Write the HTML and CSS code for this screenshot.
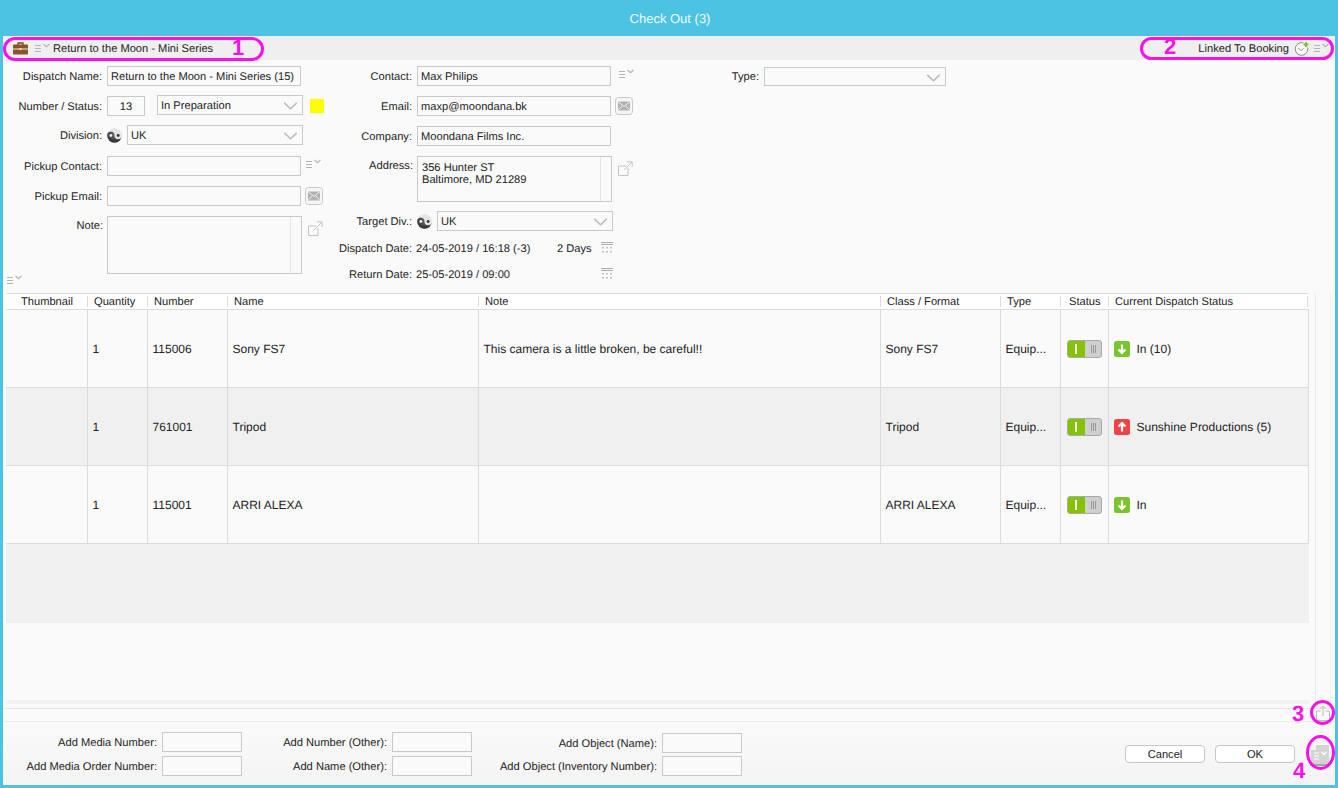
FILE: index.html
```html
<!DOCTYPE html>
<html lang="en">
<head>
<meta charset="utf-8">
<title>Check Out (3)</title>
<link rel="stylesheet" href="styles.css">
</head>
<body>
<svg class="defs" width="0" height="0" aria-hidden="true">
  <defs>
    <radialGradient id="g-dark" cx="50%" cy="30%" r="75%"><stop offset="0" stop-color="#6a6a70"/><stop offset="1" stop-color="#222226"/></radialGradient>
    <symbol id="i-menu" viewBox="0 0 16 10">
      <path d="M0 2.500h6M0 5.500h6M0 8.500h6" stroke="#b4b4b4" fill="none"/>
      <path d="M8.500 1l3 2.800 3-2.800" stroke="#b4b4b4" stroke-width="1.200" fill="none"/>
    </symbol>
    <symbol id="i-yin" viewBox="0 0 16 16">
      <circle cx="8" cy="8" r="7.800" fill="#e4e4e4"/>
      <path d="M15.800 8A7.800 7.800 0 0 1 .2 8 3.900 3.900 0 0 1 8 8a3.900 3.900 0 0 0 7.800 0z" fill="url(#g-dark)"/>
      <circle cx="4.100" cy="8" r="1.500" fill="#eee"/>
      <circle cx="11.900" cy="8" r="1.500" fill="#333"/>
    </symbol>
    <symbol id="i-mail" viewBox="0 0 18 18">
      <rect x=".5" y=".5" width="17" height="17" rx="3" fill="#f6f6f6" stroke="#c8c8c8"/>
      <rect x="3" y="4.500" width="12" height="9" fill="#b2b2b2"/>
      <path d="M3 4.500l6 5 6-5M3 13.500l4.500-5M15 13.500l-4.500-5" stroke="#f0f0f0" fill="none"/>
    </symbol>
    <symbol id="i-link" viewBox="0 0 15 15">
      <path d="M8 5H.5v9.500H10V7M6 9l8-8M9 .8h5.200V6" stroke="#c4c4c4" fill="none"/>
    </symbol>
    <symbol id="i-cal" viewBox="0 0 12 11">
      <path d="M0 .5h12M0 2.500h12" stroke="#adadad"/>
      <path d="M1 5h2v1.500H1zM5 5h2v1.500H5zM9 5h2v1.500H9zM1 9h2v1.500H1zM5 9h2v1.500H5zM9 9h2v1.500H9z" fill="#c0c0c0"/>
    </symbol>
  </defs>
</svg>

<div class="app">
  <header class="titlebar">Check Out (3)</header>

  <main class="dialog">
    <div class="topbar">
      <div class="topbar-left">
        <svg class="briefcase" width="15" height="13" viewBox="0 0 15 13"><path d="M5 3V1h5v2" fill="none" stroke="#7b4a22" stroke-width="1.300"/><rect y="2.500" width="15" height="10" rx="1" fill="#8a5528"/><path d="M0 7h15" stroke="#f1e6d8"/><rect x="6.500" y="6" width="2" height="2" fill="#f1e6d8"/></svg>
        <svg class="ic-menu" width="16" height="10"><use href="#i-menu"/></svg>
        <span class="bar-text">Return to the Moon - Mini Series</span>
      </div>
      <div class="topbar-right">
        <span class="bar-text">Linked To Booking</span>
        <svg class="clock" width="17" height="16" viewBox="0 0 17 16"><circle cx="7.500" cy="9" r="6.300" fill="#fafafa" stroke="#8c8c8c"/><path d="M4 8l3 2.500 2.500-2" stroke="#999" fill="none"/><path d="M12 1.500v6M9 4.500h6" stroke="#fafafa" stroke-width="3.500"/><path d="M12 2v5M9.500 4.500h5" stroke="#76c21f" stroke-width="1.800"/></svg>
        <svg class="ic-menu" width="16" height="10"><use href="#i-menu"/></svg>
      </div>
    </div>

    <form class="form">
      <div class="col col-a">
        <div class="row"><label class="lbl">Dispatch Name:</label><div class="field w-194">Return to the Moon - Mini Series (15)</div></div>
        <div class="row"><label class="lbl">Number / Status:</label><div class="field w-38 center">13</div>
          <div class="select w-146 ml-12 up-1">In Preparation<svg class="chev" width="16" height="9" viewBox="0 0 16 9"><path d="M1 1l7 6.500L15 1" fill="none" stroke="#b9b9b9" stroke-width="1.600"/></svg></div>
          <span class="swatch"></span></div>
        <div class="row up-row"><label class="lbl">Division:</label><svg class="yin" width="15" height="15"><use href="#i-yin"/></svg>
          <div class="select w-176">UK<svg class="chev" width="16" height="9" viewBox="0 0 16 9"><path d="M1 1l7 6.500L15 1" fill="none" stroke="#b9b9b9" stroke-width="1.600"/></svg></div></div>
        <div class="row"><label class="lbl">Pickup Contact:</label><div class="field w-194"></div><svg class="ic-menu side-menu" width="16" height="10"><use href="#i-menu"/></svg></div>
        <div class="row"><label class="lbl">Pickup Email:</label><div class="field w-194"></div><svg class="side-mail" width="18" height="18"><use href="#i-mail"/></svg></div>
        <div class="row row-note"><label class="lbl lbl-top lbl-note">Note:</label><div class="area w-195 h-58"><span class="area-bar"></span></div><svg class="side-link" width="15" height="15"><use href="#i-link"/></svg></div>
        <svg class="ic-menu form-menu" width="16" height="10"><use href="#i-menu"/></svg>
      </div>

      <div class="col col-b">
        <div class="row"><label class="lbl">Contact:</label><div class="field w-194">Max Philips</div><svg class="ic-menu side-menu" width="16" height="10"><use href="#i-menu"/></svg></div>
        <div class="row"><label class="lbl">Email:</label><div class="field w-194">maxp@moondana.bk</div><svg class="side-mail" width="18" height="18"><use href="#i-mail"/></svg></div>
        <div class="row"><label class="lbl">Company:</label><div class="field w-194">Moondana Films Inc.</div></div>
        <div class="row row-addr"><label class="lbl lbl-top lbl-note">Address:</label><div class="area w-195 h-46">356 Hunter ST<br>Baltimore, MD 21289<span class="area-bar"></span></div><svg class="side-link" width="15" height="15"><use href="#i-link"/></svg></div>
        <div class="row row-target"><label class="lbl">Target Div.:</label><svg class="yin" width="15" height="15"><use href="#i-yin"/></svg>
          <div class="select w-176">UK<svg class="chev" width="16" height="9" viewBox="0 0 16 9"><path d="M1 1l7 6.500L15 1" fill="none" stroke="#b9b9b9" stroke-width="1.600"/></svg></div></div>
        <div class="row row-date"><label class="lbl">Dispatch Date:</label><span class="date">24-05-2019 / 16:18 (-3)</span><span class="days">2 Days</span><svg class="cal" width="12" height="11"><use href="#i-cal"/></svg></div>
        <div class="row row-date2"><label class="lbl">Return Date:</label><span class="date">25-05-2019 / 09:00</span><svg class="cal" width="12" height="11"><use href="#i-cal"/></svg></div>
      </div>

      <div class="col col-c">
        <div class="row"><label class="lbl">Type:</label><div class="select w-182 h-19"><svg class="chev" width="16" height="9" viewBox="0 0 16 9"><path d="M1 1l7 6.500L15 1" fill="none" stroke="#b9b9b9" stroke-width="1.600"/></svg></div></div>
      </div>
    </form>

    <section class="list">
      <div class="list-main">
        <table class="grid">
          <colgroup>
            <col class="c1"><col class="c2"><col class="c3"><col class="c4"><col class="c5"><col class="c6"><col class="c7"><col class="c8"><col class="c9">
          </colgroup>
          <thead>
            <tr><th class="th-thumb"><span>Thumbnail</span></th><th><span>Quantity</span></th><th><span>Number</span></th><th><span>Name</span></th><th><span>Note</span></th><th><span>Class / Format</span></th><th><span>Type</span></th><th class="th-status"><span>Status</span></th><th><span>Current Dispatch Status</span></th></tr>
          </thead>
          <tbody>
            <tr>
              <td></td><td>1</td><td>115006</td><td>Sony FS7</td><td>This camera is a little broken, be careful!!</td><td>Sony FS7</td><td>Equip...</td>
              <td class="td-toggle"><span class="toggle"><span class="t-on"></span><span class="t-off"></span></span></td>
              <td><span class="state"><svg width="16" height="16" viewBox="0 0 16 16"><rect width="16" height="16" rx="2.500" fill="#7ac52c"/><path d="M8 3.500v8M4.500 8.500L8 12l3.500-3.500" stroke="#fff" stroke-width="2.200" fill="none"/></svg>In (10)</span></td>
            </tr>
            <tr class="alt">
              <td></td><td>1</td><td>761001</td><td>Tripod</td><td></td><td>Tripod</td><td>Equip...</td>
              <td class="td-toggle"><span class="toggle"><span class="t-on"></span><span class="t-off"></span></span></td>
              <td><span class="state"><svg width="16" height="16" viewBox="0 0 16 16"><rect width="16" height="16" rx="2.500" fill="#f04444"/><path d="M8 12.500v-8M4.500 7.500L8 4l3.500 3.500" stroke="#fff" stroke-width="2.200" fill="none"/></svg>Sunshine Productions (5)</span></td>
            </tr>
            <tr>
              <td></td><td>1</td><td>115001</td><td>ARRI ALEXA</td><td></td><td>ARRI ALEXA</td><td>Equip...</td>
              <td class="td-toggle"><span class="toggle"><span class="t-on"></span><span class="t-off"></span></span></td>
              <td><span class="state"><svg width="16" height="16" viewBox="0 0 16 16"><rect width="16" height="16" rx="2.500" fill="#7ac52c"/><path d="M8 3.500v8M4.500 8.500L8 12l3.500-3.500" stroke="#fff" stroke-width="2.200" fill="none"/></svg>In</span></td>
            </tr>
          </tbody>
        </table>
        <div class="empty"></div>
        <div class="spacer"></div>
        <div class="hscroll"></div>
      </div>
      <div class="vscroll"></div>
    </section>

    <div class="strip">
      <svg class="share" width="14" height="16" viewBox="0 0 14 16"><path d="M4.500 6H.5v9.500h13V6h-4M7 11V1M3.800 3.800L7 .8l3.200 3" fill="none" stroke="#bcbcbc"/></svg>
    </div>

    <footer class="footer">
      <div class="adds">
        <div class="add-col add-a">
          <div class="add-row"><label class="lbl-add">Add Media Number:</label><div class="field w-80"></div></div>
          <div class="add-row"><label class="lbl-add">Add Media Order Number:</label><div class="field w-80"></div></div>
        </div>
        <div class="add-col add-b">
          <div class="add-row"><label class="lbl-add">Add Number (Other):</label><div class="field w-80"></div></div>
          <div class="add-row"><label class="lbl-add">Add Name (Other):</label><div class="field w-80"></div></div>
        </div>
        <div class="add-col add-c">
          <div class="add-row"><label class="lbl-add">Add Object (Name):</label><div class="field w-80"></div></div>
          <div class="add-row"><label class="lbl-add">Add Object (Inventory Number):</label><div class="field w-80"></div></div>
        </div>
      </div>
      <div class="actions">
        <button class="btn" type="button">Cancel</button>
        <button class="btn" type="button">OK</button>
        <svg class="doc" width="20" height="22" viewBox="0 0 20 22"><path d="M1 20V6l5-5h13v19z" fill="#d4d4d4"/><path d="M6 1v5H1z" fill="#f4f4f4"/><path d="M4 9h5M4 12h5M4 15h5" stroke="#fff"/><path d="M11.500 8l2.500 2.500L16.500 8" stroke="#fff" stroke-width="1.400" fill="none"/><path d="M0 21h20" stroke="#8c8c8c" stroke-width="1.500"/></svg>
      </div>
    </footer>
  </main>

  <span class="ring ring-1"></span><span class="num num-1">1</span>
  <span class="ring ring-2"></span><span class="num num-2">2</span>
  <span class="ring ring-3"></span><span class="num num-3">3</span>
  <span class="ring ring-4"></span><span class="num num-4">4</span>
</div>
</body>
</html>
```

FILE: styles.css
```css
* { box-sizing: border-box; }
html, body { margin: 0; height: 100%; overflow: hidden; }
body {
  font-family: "Liberation Sans", Arial, sans-serif;
  font-size: 11.130px;
  color: #222;
  background: #4cc3e3;
  text-rendering: geometricPrecision;
}
.defs { position: absolute; }
svg { display: block; flex: none; }

.app { position: relative; display: flex; flex-direction: column; width: 1338px; height: 788px; }
.titlebar {
  height: 36px;
  flex: none;
  display: flex;
  align-items: center;
  justify-content: center;
  color: #f2fbfe;
  font-size: 13px;
  padding-left: 2px;
}
.dialog {
  flex: 1;
  min-height: 0;
  margin: 0 3px 3px;
  background: #fafafa;
  display: flex;
  flex-direction: column;
}

/* top bar */
.topbar {
  height: 24px;
  flex: none;
  background: #efefef;
  display: flex;
  align-items: center;
  justify-content: space-between;
}
.bar-text { padding-top: 2px; }
.topbar-left { display: flex; align-items: center; padding-left: 10px; }
.topbar-left .briefcase { margin-right: 7px; }
.topbar-left .ic-menu { margin-right: 2px; margin-top: -1px; }
.topbar-right { display: flex; align-items: center; padding-right: 5px; }
.topbar-right .bar-text { margin-right: 5px; }
.topbar-right .clock { margin-right: 1px; }
.topbar-right .ic-menu { margin-left: 2px; margin-top: -1px; }

/* form */
.form { height: 233px; flex: none; display: flex; padding-top: 6px; }
.col { display: flex; flex-direction: column; gap: 10px; }
.col-a { width: 327px; --lbl: 99px; }
.col-b { width: 370px; --lbl: 82px; }
.col-c { --lbl: 59px; }
.row { display: flex; align-items: center; height: 20px; }
.lbl { width: var(--lbl); flex: none; text-align: right; margin-right: 5px; white-space: nowrap; padding-top: 2px; }
.lbl-top { align-self: flex-start; padding-top: 4px; }
.lbl-note { margin-right: 4px; width: calc(var(--lbl) + 1px); }
.field, .select, .area {
  background: #fafafa;
  border: 1px solid #c9c9c9;
  height: 20px;
  display: flex;
  align-items: center;
  padding: 2px 0 0 3px;
  white-space: nowrap;
  flex: none;
}
.center { justify-content: center; padding-left: 0; }
.w-194 { width: 194px; }
.w-38 { width: 38px; }
.w-146 { width: 146px; }
.w-176 { width: 176px; }
.w-182 { width: 182px; }
.w-195 { width: 195px; }
.w-80 { width: 80px; }
.h-19 { height: 19px; }
.h-58 { height: 58px; }
.h-46 { height: 46px; }
.ml-12 { margin-left: 12px; }
.up-1 { margin-top: -2px; }
.select { position: relative; justify-content: flex-start; }
.chev { position: absolute; right: 4px; top: 6px; width: 15px; height: 8px; }
.swatch { width: 14px; height: 14px; margin-left: 7px; background: #ffff00; }
.yin { margin-right: 5px; }
.up-row { margin-top: -1px; margin-bottom: 1px; }
.side-menu { margin: -4px 0 0 5px; }
.col-b .side-menu { margin-left: 8px; }
.side-mail { margin: 0 0 0 4px; }
.side-link { align-self: flex-start; margin: 5px 0 0 6px; }
.row-note { height: 58px; align-items: flex-start; }
.row-addr { height: 46px; align-items: flex-start; }
.area { position: relative; display: block; padding: 5px 0 0 4px; line-height: 12px; }
.area-bar { position: absolute; top: 0; right: 0; bottom: 0; width: 11px; border-left: 1px solid #e4e4e4; }
.form-menu { margin: -9px 0 0 4px; }
.row-target { margin-top: -1px; }
.row-date { margin-top: -3px; }
.row-date2 { margin-top: -4px; }
.date { width: 141px; margin-left: -1px; padding-top: 2px; }
.days { width: 44px; padding-top: 2px; }
.cal { margin-top: -2px; }
.row-date2 .date { width: 185px; }

/* list */
.list { flex: 1; min-height: 0; display: flex; }
.list-main { width: 1303px; margin-left: 3px; display: flex; flex-direction: column; }
.grid { width: 1302px; table-layout: fixed; border-collapse: collapse; flex: none; }
.c1 { width: 81px; }
.c2 { width: 60px; }
.c3 { width: 80px; }
.c4 { width: 251px; }
.c5 { width: 402px; }
.c6 { width: 120px; }
.c7 { width: 60px; }
.c8 { width: 48px; }
.c9 { width: 200px; }
.grid th {
  height: 16px;
  padding: 0;
  background: #fff;
  font-weight: 400;
  font-size: 11.130px;
  text-align: left;
  border-top: 1px solid #dcdcdc;
  border-bottom: 1px solid #dcdcdc;
}
.grid th span { display: block; height: 11px; line-height: 13px; padding-left: 6px; border-left: 1px solid #dcdcdc; white-space: nowrap; }
.grid th.th-thumb span { padding-left: 15px; border-left: 0; }
.grid th.th-status span { padding-left: 8px; }
.grid th:last-child span { border-right: 1px solid #dcdcdc; }
.grid td {
  height: 78px;
  padding: 0 0 0 5px;
  font-size: 12px;
  border-bottom: 1px solid #dcdcdc;
  border-left: 1px solid #dcdcdc;
  white-space: nowrap;
}
.grid td:first-child { border-left: 0; }
.grid td:last-child { border-right: 1px solid #dcdcdc; }
.alt td { background: #f0f0f0; }
.grid .td-toggle { padding-left: 6px; }
.toggle {
  display: flex;
  width: 35px;
  height: 18px;
  border: 1px solid #a9a9a9;
  border-radius: 3px;
  overflow: hidden;
  background: #cfcfcf;
}
.t-on { width: 17px; background: #84c300; position: relative; }
.t-on::after { content: ""; position: absolute; left: 7px; top: 3px; width: 2px; height: 10px; background: #fff; }
.t-off { flex: 1; position: relative; }
.t-off::after { content: ""; position: absolute; left: 6px; top: 4px; width: 5px; height: 8px; background: repeating-linear-gradient(90deg, #999 0 1px, transparent 1px 2px); }
.state { display: flex; align-items: center; gap: 7px; }
.empty { height: 79px; flex: none; background: #f0f0f0; }
.spacer { flex: 1; }
.hscroll { height: 8px; flex: none; background: linear-gradient(#f2f2f2 0 4px, transparent 4px); }
.vscroll { width: 16px; margin-left: 6px; border-left: 1px solid #e9e9e9; border-right: 1px solid #f0f0f0; }

/* strip between list and footer */
.strip { height: 14px; flex: none; position: relative; border-top: 1px solid #e8e8e8; border-bottom: 1px solid #eaeaea; }
.share { position: absolute; right: 5px; top: -4px; }

/* footer */
.footer {
  height: 63px;
  flex: none;
  display: flex;
  justify-content: space-between;
  background: linear-gradient(#fafafa, #f4f4f4);
}
.adds { display: flex; gap: 5px; padding-top: 10px; }
.add-col { display: flex; flex-direction: column; gap: 4px; }
.add-row { display: flex; align-items: center; }
.lbl-add { flex: none; text-align: right; margin-right: 5px; white-space: nowrap; padding-top: 2px; }
.add-a .lbl-add { width: 154px; }
.add-b .lbl-add { width: 140px; }
.add-c .lbl-add { width: 180px; }
.add-c { padding-top: 1px; gap: 3px; }
.actions { display: flex; align-items: flex-start; padding: 23px 5px 0 0; }
.btn {
  width: 80px;
  height: 18px;
  padding: 0;
  margin-right: 10px;
  font: inherit;
  color: #222;
  background: #fff;
  border: 1px solid #c6c6c6;
  border-radius: 4px;
}
.btn:nth-child(2) { margin-right: 15px; }
.doc { margin-top: -1px; }

/* annotations drawn over the screenshot */
.ring { position: absolute; border: 3px solid #f812e8; border-radius: 50%; }
.ring-1 { left: 3px; top: 37px; width: 261px; height: 24px; border-radius: 12px; }
.ring-2 { left: 1140px; top: 37px; width: 194px; height: 23px; border-radius: 12px; }
.ring-3 { left: 1310px; top: 700px; width: 25px; height: 25px; }
.ring-4 { left: 1306px; top: 735px; width: 29px; height: 35px; }
.num { position: absolute; color: #f812e8; font-weight: 700; font-size: 22px; line-height: 22px; }
.num-1 { left: 232px; top: 37px; }
.num-2 { left: 1164px; top: 36px; }
.num-3 { left: 1292px; top: 703px; }
.num-4 { left: 1293px; top: 760px; }
```
